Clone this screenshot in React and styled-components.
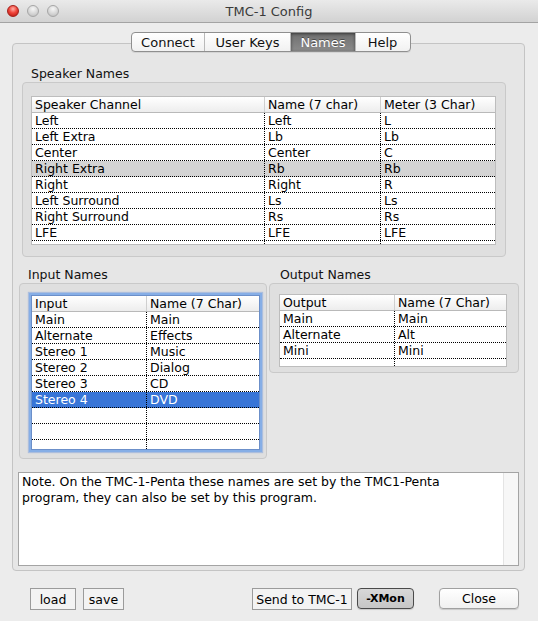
import React from 'react';
import styled, { createGlobalStyle } from 'styled-components';

const GlobalStyle = createGlobalStyle`
  html, body {
    margin: 0;
    padding: 0;
    background: #ececec;
  }
  * {
    box-sizing: border-box;
  }
`;

const Window = styled.div`
  width: 538px;
  height: 621px;
  background: #ececec;
  display: flex;
  flex-direction: column;
  font-family: "DejaVu Sans", "Liberation Sans", sans-serif;
  font-size: 12.5px;
  color: #000;
  overflow: hidden;
`;

const TitleBar = styled.div`
  height: 23px;
  flex-shrink: 0;
  display: flex;
  align-items: center;
  background: linear-gradient(#eaeaea, #d2d2d2);
  border-bottom: 1px solid #a3a3a3;
  padding-left: 7px;
  position: relative;
`;

const Light = styled.span`
  width: 12px;
  height: 12px;
  border-radius: 50%;
  margin-right: 8px;
  background: ${p => p.$red
    ? 'radial-gradient(circle at 50% 30%, #ffb1a8 0%, #f0463c 45%, #b3120b 100%)'
    : 'radial-gradient(circle at 50% 30%, #f6f6f6 0%, #d6d6d6 55%, #b7b7b7 100%)'};
  border: 1px solid ${p => p.$red ? '#a3201a' : '#a6a6a6'};
`;

const Title = styled.div`
  position: absolute;
  left: 0;
  right: 0;
  text-align: center;
  font-size: 13px;
  color: #3a3a3a;
  pointer-events: none;
`;

const Body = styled.div`
  padding: 9px 0 0 12px;
  display: flex;
  flex-direction: column;
`;

const TabBar = styled.div`
  display: flex;
  margin-left: 119px;
  height: 20px;
  border: 1px solid #8f8f8f;
  border-radius: 4px;
  overflow: hidden;
  background: linear-gradient(#ffffff, #f1f1f1);
  position: relative;
  z-index: 1;
  align-self: flex-start;
  box-shadow: 0 1px 0 rgba(0, 0, 0, 0.08);
`;

const Tab = styled.div`
  width: ${p => p.$w}px;
  display: flex;
  align-items: center;
  justify-content: center;
  font-size: 13px;
  color: ${p => p.$active ? '#fff' : '#111'};
  background: ${p => p.$active ? 'linear-gradient(#6f6f6f, #8a8a8a)' : 'transparent'};
  box-shadow: ${p => p.$active ? 'inset 0 1px 3px rgba(0,0,0,0.5)' : 'none'};
  text-shadow: ${p => p.$active ? '0 -1px 0 rgba(0,0,0,0.4)' : 'none'};
  border-right: 1px solid ${p => p.$last ? 'transparent' : '#b9b9b9'};
`;

const TabPanel = styled.div`
  margin-top: -9px;
  width: 513px;
  height: 528px;
  border: 1px solid #c4c4c4;
  border-radius: 4px;
  background: #e6e6e6;
  padding-top: 22px;
  display: flex;
  flex-direction: column;
`;

const GroupLabel = styled.div`
  height: 16px;
  line-height: 16px;
  margin-left: ${p => p.$x}px;
  color: #111;
`;

const GroupBox = styled.div`
  margin-left: ${p => p.$x || 0}px;
  width: ${p => p.$w}px;
  height: ${p => p.$h}px;
  border: 1px solid #c9c9c9;
  border-radius: 4px;
  background: #dfdfdf;
  padding: ${p => p.$pad};
`;

const Row = styled.div`
  display: flex;
  margin-top: 10px;
  align-items: flex-start;
`;

const Column = styled.div`
  margin-left: ${p => p.$x}px;
  width: ${p => p.$w}px;
  display: flex;
  flex-direction: column;
`;

const TableWrap = styled.div`
  width: ${p => p.$w}px;
  height: ${p => p.$h}px;
  background: #fff;
  border: 1px solid ${p => p.$focus ? '#6b8fc9' : '#bdbdbd'};
  box-shadow: ${p => p.$focus ? '0 0 0 2px #86aee6, 0 0 1px 3px rgba(110,150,220,0.45)' : 'none'};
  display: flex;
  flex-direction: column;
  overflow: hidden;
`;

const HeaderRow = styled.div`
  display: flex;
  height: 16px;
  flex-shrink: 0;
  background: linear-gradient(#ffffff, #ededed);
  border-bottom: 1px solid #b9b9b9;
`;

const HeaderCell = styled.div`
  width: ${p => p.$w ? `${p.$w}px` : 'auto'};
  flex: ${p => p.$w ? '0 0 auto' : '1'};
  padding-left: 3px;
  line-height: 16px;
  white-space: nowrap;
  overflow: hidden;
  border-right: 1px solid ${p => p.$last ? 'transparent' : '#cfcfcf'};
`;

const BodyRow = styled.div`
  display: flex;
  height: ${p => p.$fill ? 'auto' : '16px'};
  flex: ${p => p.$fill ? '1' : '0 0 auto'};
  border-bottom: ${p => p.$fill ? 'none' : '1px dotted #000'};
  background: ${p => p.$sel === 'blue' ? '#3875d7' : p.$sel === 'gray' ? '#d4d4d4' : 'transparent'};
  color: ${p => p.$sel === 'blue' ? '#fff' : '#000'};
`;

const Cell = styled.div`
  width: ${p => p.$w ? `${p.$w}px` : 'auto'};
  flex: ${p => p.$w ? '0 0 auto' : '1'};
  padding-left: 3px;
  line-height: 16px;
  white-space: nowrap;
  overflow: hidden;
  border-right: ${p => p.$last ? 'none' : '1px dotted #000'};
`;

const NoteBox = styled.div`
  margin: 13px 0 0 5px;
  width: 501px;
  height: 94px;
  background: #fff;
  border: 1px solid #a4a4a4;
  display: flex;
`;

const NoteText = styled.div`
  flex: 1;
  padding: 1px 3px;
  line-height: 16px;
`;

const ScrollTrack = styled.div`
  width: 15px;
  background: #f7f7f7;
  border-left: 1px solid #e4e4e4;
`;

const ButtonRow = styled.div`
  display: flex;
  margin-top: 17px;
  height: 22px;
`;

const FlatButton = styled.div`
  margin-left: ${p => p.$x}px;
  width: ${p => p.$w}px;
  height: 22px;
  border: 1px solid #9b9b9b;
  background: #f3f3f3;
  display: flex;
  align-items: center;
  justify-content: center;
  white-space: nowrap;
`;

const RoundButton = styled.div`
  margin-left: ${p => p.$x}px;
  width: ${p => p.$w}px;
  height: 21px;
  border-radius: 4px;
  border: 1px solid ${p => p.$dark ? '#4a4a4a' : '#a0a0a0'};
  background: ${p => p.$dark ? 'linear-gradient(#d8d8d8, #c6c6c6)' : 'linear-gradient(#ffffff, #f0f0f0)'};
  box-shadow: 0 1px 1px rgba(0, 0, 0, 0.15);
  display: flex;
  align-items: center;
  justify-content: center;
  font-weight: ${p => p.$dark ? 'bold' : 'normal'};
  font-size: ${p => p.$dark ? '11px' : '12.5px'};
`;

const speakerRows = [
  ['Left', 'Left', 'L'],
  ['Left Extra', 'Lb', 'Lb'],
  ['Center', 'Center', 'C'],
  ['Right Extra', 'Rb', 'Rb'],
  ['Right', 'Right', 'R'],
  ['Left Surround', 'Ls', 'Ls'],
  ['Right Surround', 'Rs', 'Rs'],
  ['LFE', 'LFE', 'LFE'],
];

const inputRows = [
  ['Main', 'Main'],
  ['Alternate', 'Effects'],
  ['Stereo 1', 'Music'],
  ['Stereo 2', 'Dialog'],
  ['Stereo 3', 'CD'],
  ['Stereo 4', 'DVD'],
  ['', ''],
  ['', ''],
];

const outputRows = [
  ['Main', 'Main'],
  ['Alternate', 'Alt'],
  ['Mini', 'Mini'],
];

const Table = ({ w, h, cols, headers, rows, selected, selStyle, focus }) => (
  <TableWrap $w={w} $h={h} $focus={focus}>
    <HeaderRow>
      {headers.map((t, i) => (
        <HeaderCell key={i} $w={cols[i]} $last={i === headers.length - 1}>{t}</HeaderCell>
      ))}
    </HeaderRow>
    {rows.map((r, ri) => (
      <BodyRow key={ri} $sel={ri === selected ? selStyle : null}>
        {r.map((t, i) => (
          <Cell key={i} $w={cols[i]} $last={i === r.length - 1}>{t}</Cell>
        ))}
      </BodyRow>
    ))}
    <BodyRow $fill>
      {headers.map((t, i) => (
        <Cell key={i} $w={cols[i]} $last={i === headers.length - 1} />
      ))}
    </BodyRow>
  </TableWrap>
);

const tabs = [
  { label: 'Connect', w: 73 },
  { label: 'User Keys', w: 86 },
  { label: 'Names', w: 65, active: true },
  { label: 'Help', w: 54 },
];

const App = () => {
  return (
    <Window>
      <GlobalStyle />
      <TitleBar>
        <Light $red />
        <Light />
        <Light />
        <Title>TMC-1 Config</Title>
      </TitleBar>
      <Body>
        <TabBar>
          {tabs.map((t, i) => (
            <Tab key={t.label} $w={t.w} $active={t.active} $last={i === tabs.length - 1}>{t.label}</Tab>
          ))}
        </TabBar>
        <TabPanel>
          <GroupLabel $x={18}>Speaker Names</GroupLabel>
          <GroupBox $x={9} $w={484} $h={175} $pad="13px 0 0 8px">
            <Table
              w={465}
              h={149}
              cols={[233, 116, null]}
              headers={['Speaker Channel', 'Name (7 char)', 'Meter (3 Char)']}
              rows={speakerRows}
              selected={3}
              selStyle="gray"
            />
          </GroupBox>
          <Row>
            <Column $x={6} $w={248}>
              <GroupLabel $x={9}>Input Names</GroupLabel>
              <GroupBox $w={248} $h={176} $pad="11px 0 0 11px">
                <Table
                  w={229}
                  h={155}
                  cols={[115, null]}
                  headers={['Input', 'Name (7 Char)']}
                  rows={inputRows}
                  selected={5}
                  selStyle="blue"
                  focus
                />
              </GroupBox>
            </Column>
            <Column $x={2} $w={250}>
              <GroupLabel $x={11}>Output Names</GroupLabel>
              <GroupBox $w={250} $h={90} $pad="10px 0 0 9px">
                <Table
                  w={228}
                  h={73}
                  cols={[115, null]}
                  headers={['Output', 'Name (7 Char)']}
                  rows={outputRows}
                />
              </GroupBox>
            </Column>
          </Row>
          <NoteBox>
            <NoteText>
              Note. On the TMC-1-Penta these names are set by the TMC1-Penta program, they can also be set by this program.
            </NoteText>
            <ScrollTrack />
          </NoteBox>
        </TabPanel>
        <ButtonRow>
          <FlatButton $x={18} $w={46}>load</FlatButton>
          <FlatButton $x={7} $w={41}>save</FlatButton>
          <FlatButton $x={128} $w={100}>Send to TMC-1</FlatButton>
          <RoundButton $x={5} $w={57} $dark>-XMon</RoundButton>
          <RoundButton $x={25} $w={80}>Close</RoundButton>
        </ButtonRow>
      </Body>
    </Window>
  );
};

export default App;
